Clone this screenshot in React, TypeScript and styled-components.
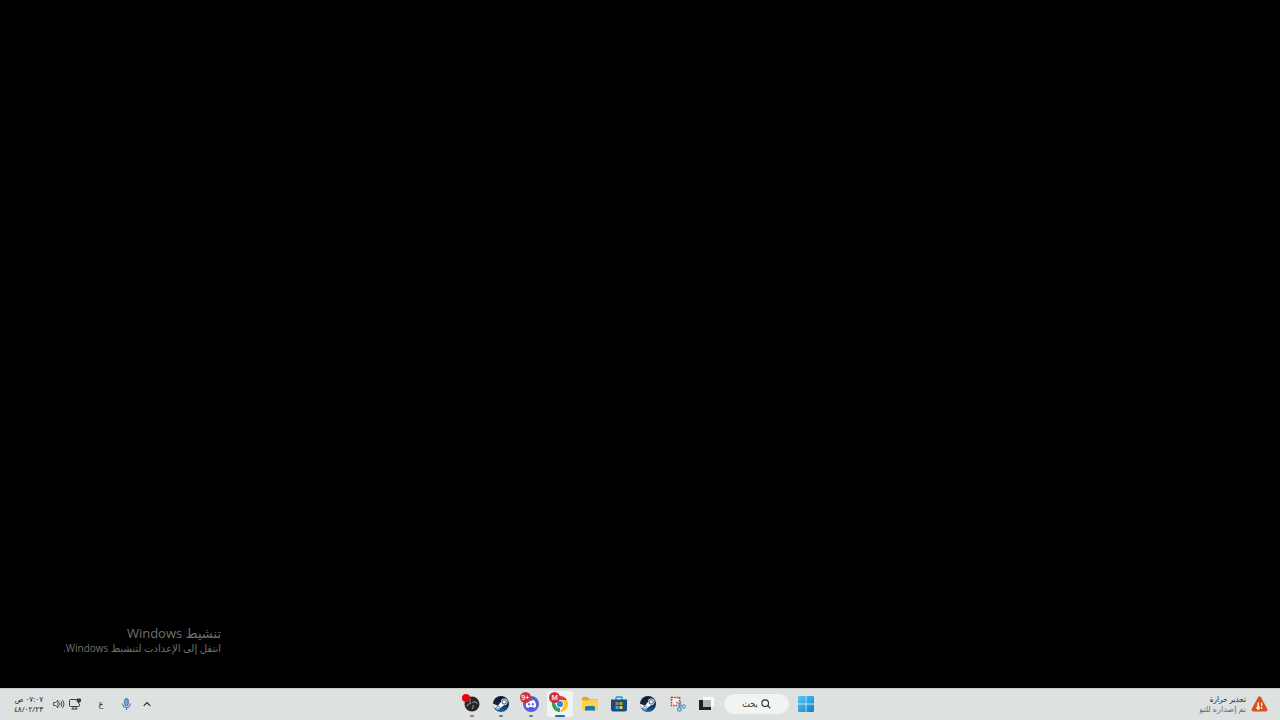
import React from "react";
import styled, { createGlobalStyle } from "styled-components";

const GlobalStyle = createGlobalStyle`
  * { box-sizing: border-box; }
  body { margin: 0; background: #000; }
  button { margin: 0; padding: 0; border: 0; background: none; font: inherit; color: inherit; }
  svg { display: block; }
`;

const Desktop = styled.div`
  direction: rtl;
  min-height: 100vh;
  display: flex;
  flex-direction: column;
  background: #000;
  font-family: "Open Sans", "DejaVu Sans Condensed", "DejaVu Sans", sans-serif;
`;

const Wallpaper = styled.main`
  flex: 1;
  display: flex;
  justify-content: flex-end;
  align-items: flex-end;
  padding: 0 0 33px 64px;
`;

const Watermark = styled.section`
  width: 157px;
  color: #707070;
  font-family: "Open Sans", "DejaVu Sans", sans-serif;
  white-space: nowrap;
`;

const WatermarkTitle = styled.h1`
  margin: 0;
  font-size: 13px;
  font-weight: 400;
  line-height: 16px;
`;

const WatermarkText = styled.p`
  margin: 0;
  font-size: 10px;
  line-height: 14px;
`;

const Taskbar = styled.footer`
  height: 32px;
  display: grid;
  grid-template-columns: 1fr auto 1fr;
  align-items: center;
  background: #dde1e0;
  box-shadow: inset 0 1px #c6c9c8;
  color: #2a2a2a;
  font-size: 8px;
  line-height: 10px;
`;

const Weather = styled.button`
  justify-self: start;
  display: flex;
  align-items: center;
  gap: 5px;
  padding-right: 12px;
  text-align: right;
  white-space: nowrap;
`;

const Line = styled.span<{ $muted?: boolean }>`
  display: block;
  color: ${(p) => (p.$muted ? "#686b6b" : "#222")};
  font-family: ${(p) => (p.$muted ? '"Open Sans", "DejaVu Sans", sans-serif' : "inherit")};
`;

const Center = styled.div`
  display: flex;
  align-items: center;
  gap: 4px;
  padding-right: 2px;
`;

const Apps = styled.nav`
  width: 261px;
  display: flex;
  justify-content: space-between;
`;

const AppButton = styled.button<{ $active?: boolean }>`
  position: relative;
  width: 26px;
  height: 26px;
  display: flex;
  align-items: center;
  justify-content: center;
  border-radius: 3px;
  background: ${(p) => (p.$active ? "#f2f4f3" : "transparent")};
`;

const Indicator = styled.span<{ $active?: boolean }>`
  position: absolute;
  bottom: 0;
  left: 50%;
  transform: translateX(-50%);
  width: ${(p) => (p.$active ? 10 : 4)}px;
  height: 2px;
  border-radius: 1px;
  background: ${(p) => (p.$active ? "#1773b5" : "#777b7b")};
`;

const Badge = styled.span<{ $plain?: boolean }>`
  position: absolute;
  top: ${(p) => (p.$plain ? 3 : 1)}px;
  left: ${(p) => (p.$plain ? 3 : 2)}px;
  width: ${(p) => (p.$plain ? 8 : 11)}px;
  height: ${(p) => (p.$plain ? 8 : 11)}px;
  border-radius: 50%;
  background: ${(p) => (p.$plain ? "#f00006" : "#ca3340")};
  color: #fff;
  direction: ltr;
  font-size: 7px;
  font-weight: 600;
  line-height: 11px;
  text-align: center;
`;

const Search = styled.button`
  width: 65px;
  height: 20px;
  display: flex;
  align-items: center;
  justify-content: center;
  gap: 3px;
  border-radius: 10px;
  background: #f2f4f3;
  font-size: 9px;
`;

const Tray = styled.div`
  justify-self: end;
  display: flex;
  align-items: center;
  padding-left: 12px;
`;

const TrayButton = styled.button<{ $width: number }>`
  width: ${(p) => p.$width}px;
  height: 26px;
  display: flex;
  align-items: center;
  justify-content: center;
  font-size: 9px;
`;

const SystemButton = styled(TrayButton)`
  gap: 4px;
  margin: 0 6px 0 10px;
`;

const Clock = styled.button`
  width: 31px;
  text-align: right;
  white-space: nowrap;
`;

const WarningIcon = () => (
  <svg width="17" height="16" viewBox="0 0 17 16" aria-hidden="true">
    <path d="M7 1.2Q8.5-.8 10 1.2L16.3 13Q17 15.4 14.7 15.5H2.3Q0 15.4.7 13Z" fill="#d65320" />
    <path d="M6.4 6.5v3.8a1.8 1.8 0 1 0 1.6 0V6.500Z" fill="#ffe7d9" />
    <path d="M10.6 6.500v3.700" stroke="#ffe7d9" strokeWidth="1.300" />
    <circle cx="10.600" cy="12" r=".9" fill="#ffe7d9" />
  </svg>
);

const StartIcon = () => (
  <svg width="16" height="16" viewBox="0 0 16 16" aria-hidden="true">
    <defs>
      <linearGradient id="start" x1="0" y1="0" x2="1" y2="1">
        <stop stopColor="#55c9f4" />
        <stop offset="1" stopColor="#0880ce" />
      </linearGradient>
    </defs>
    <path d="M1 0h6.6v7.6H0V1Q0 0 1 0Zm7.4 0H15q1 0 1 1v6.6H8.4ZM0 8.4h7.6V16H1q-1 0-1-1Zm8.4 0H16V15q0 1-1 1H8.4Z" fill="url(#start)" />
  </svg>
);

const SearchIcon = () => (
  <svg width="10" height="10" viewBox="0 0 10 10" fill="none" stroke="#292929" strokeWidth="1.1" aria-hidden="true">
    <circle cx="4.2" cy="4.2" r="3.3" />
    <path d="m6.7 6.7 2.7 2.7" />
  </svg>
);

const TaskViewIcon = () => (
  <svg width="16" height="16" viewBox="0 0 16 16" aria-hidden="true">
    <path d="M4 1h11v10h-3v3H4Z" fill="#f8f9f9" />
    <path d="M0 4h4v7h8v3H0Z" fill="#202020" />
    <path d="M4 4h8v7H4Z" fill="#b4b7b7" />
  </svg>
);

const SnipIcon = () => (
  <svg width="16" height="16" viewBox="0 0 16 16" fill="none" aria-hidden="true">
    <path d="M1 1h9v9H1Z" fill="#f5eeec" />
    <path d="M1.5 1.5h8v8h-8Z" stroke="#b33b22" strokeWidth="1.6" strokeDasharray="1.6 1" />
    <path d="m6 6 7 4.6M10.7 5 9.5 11.6" stroke="#769bad" strokeWidth="1.3" />
    <circle cx="13.7" cy="10.5" r="1.7" stroke="#4fa7d8" strokeWidth="1.2" />
    <circle cx="9.4" cy="13.4" r="1.8" stroke="#358fc7" strokeWidth="1.2" />
  </svg>
);

const SteamIcon = ({ id }: { id: string }) => (
  <svg width="16" height="16" viewBox="0 0 16 16" aria-hidden="true">
    <defs>
      <linearGradient id={id} x1="0" y1="0" x2="0" y2="1">
        <stop stopColor="#10172f" />
        <stop offset=".55" stopColor="#102850" />
        <stop offset="1" stopColor="#176d9f" />
      </linearGradient>
      <clipPath id={`${id}-clip`}>
        <circle cx="8" cy="8" r="8" />
      </clipPath>
    </defs>
    <circle cx="8" cy="8" r="8" fill={`url(#${id})`} />
    <g clipPath={`url(#${id}-clip)`}>
      <path d="M-1 7.3 5 9.8 8 5.7a3.3 3.3 0 1 1 3.1 3.5l-3.8 2.7a2.5 2.5 0 0 1-4.8.2L-1 10.6Z" fill="#f4f7fa" />
    </g>
    <circle cx="11.2" cy="5.9" r="2.2" fill="none" stroke="#15294b" strokeWidth=".8" />
    <circle cx="5" cy="11.6" r="1.5" fill="none" stroke="#24547d" strokeWidth=".7" />
  </svg>
);

const StoreIcon = () => (
  <svg width="16" height="16" viewBox="0 0 16 16" aria-hidden="true">
    <path d="M5 4V1.8Q5 1 5.8 1h4.4q.8 0 .8.8V4" fill="none" stroke="#2396d5" strokeWidth="1.3" />
    <path d="M0 3.5h16V13q0 2.5-2.5 2.5h-11Q0 15.500 0 13Z" fill="#164f7d" />
    <path d="M4.500 6h3v3h-3Z" fill="#ed5d3c" />
    <path d="M8.500 6h3v3h-3Z" fill="#84bd40" />
    <path d="M4.500 10h3v3h-3Z" fill="#37aee3" />
    <path d="M8.500 10h3v3h-3Z" fill="#f5c33d" />
  </svg>
);

const FolderIcon = () => (
  <svg width="16" height="16" viewBox="0 0 16 16" aria-hidden="true">
    <path d="M0 2q0-1 1-1h4.500l2 2H15q1 0 1 1v4H0Z" fill="#e7a51d" />
    <path d="M0 4.500h6L7.500 3.500H15q1 0 1 1v9q0 1-1 1H1q-1 0-1-1Z" fill="#fbd34d" />
    <path d="M3 14.500v-3q0-1.500 1.500-1.500h7q1.500 0 1.500 1.500v3Z" fill="#1777b8" />
  </svg>
);

const ChromeIcon = () => (
  <svg width="16" height="16" viewBox="0 0 16 16" aria-hidden="true">
    <path d="M8 8 1.070 4A8 8 0 0 1 14.930 4Z" fill="#dc4437" />
    <path d="M8 8V16A8 8 0 0 1 1.070 4L4.500 10Z" fill="#30a650" />
    <path d="M8 4h6.930A8 8 0 0 1 8 16l3.500-6Z" fill="#fac51c" />
    <circle cx="8" cy="8" r="4" fill="#fff" />
    <circle cx="8" cy="8" r="3.100" fill="#3c7ee8" />
  </svg>
);

const DiscordIcon = () => (
  <svg width="16" height="16" viewBox="0 0 16 16" aria-hidden="true">
    <circle cx="8" cy="8" r="8" fill="#5560dc" />
    <path d="M4.400 4.700Q5.500 4 6.600 4l.5.8h1.800l.5-.8q1.100 0 2.200.7 1.700 2.700 1.500 6-1.200 1-2.500 1.200l-.7-1.100q-1.900.6-3.800 0l-.7 1.100Q4.100 11.700 2.900 10.700q-.2-3.300 1.500-6Z" fill="#fff" />
    <ellipse cx="6.100" cy="8.300" rx="1" ry="1.200" fill="#5560dc" />
    <ellipse cx="9.900" cy="8.300" rx="1" ry="1.200" fill="#5560dc" />
  </svg>
);

const ObsIcon = () => (
  <svg width="16" height="16" viewBox="0 0 16 16" fill="none" aria-hidden="true">
    <circle cx="8" cy="8" r="7.500" fill="#262427" />
    <path d="M6.300 2.500q-2 3 1.200 5 2.700-3.300 6 0M7.500 7.500q3.300 2.500.5 5.500M7.500 7.500Q3.500 7 2.800 10.500" stroke="#aaa8ab" />
    <circle cx="8" cy="8" r="1.300" fill="#262427" />
  </svg>
);

const ChevronIcon = () => (
  <svg width="8" height="6" viewBox="0 0 8 6" fill="none" stroke="#292929" strokeWidth="1.200" aria-hidden="true">
    <path d="m.7 4.800 3.300-3.300 3.300 3.300" />
  </svg>
);

const MicIcon = () => (
  <svg width="9" height="12" viewBox="0 0 9 12" fill="none" stroke="#3566ab" aria-hidden="true">
    <rect x="2.800" y=".6" width="3.400" height="7" rx="1.700" fill="#7fa8dd" />
    <path d="M.7 5.500v.7a3.800 3.300 0 0 0 7.600 0v-.7M4.500 9.500V12" />
  </svg>
);

const MonitorIcon = () => (
  <svg width="12" height="12" viewBox="0 0 12 12" fill="none" stroke="#3b3d3d" aria-hidden="true">
    <path d="M7.500 1.500h-6q-1 0-1 1v5q0 1 1 1h8q1 0 1-1V6M4 8.500v2.500M7 8.500v2.500M2.500 11h6" />
    <path d="M8 1h3.500v2.500q-1.700 1.500-3.500 0ZM9.800 4v2" fill="#3b3d3d" />
  </svg>
);

const VolumeIcon = () => (
  <svg width="12" height="10" viewBox="0 0 12 10" fill="none" stroke="#3b3d3d" strokeWidth=".9" aria-hidden="true">
    <path d="M.6 3.500h1.900L5 1.200v7.600L2.500 6.500H.6ZM6.500 3.500q1 1.500 0 3M8 2.200q2 2.800 0 5.600M9.600 1q3 4 0 8" />
  </svg>
);

type TaskApp = {
  name: string;
  icon: React.ReactNode;
  open?: boolean;
  active?: boolean;
  badge?: string;
};

const apps: TaskApp[] = [
  { name: "عرض المهام", icon: <TaskViewIcon /> },
  { name: "أداة القطع", icon: <SnipIcon /> },
  { name: "Steam", icon: <SteamIcon id="steam-pinned" /> },
  { name: "Microsoft Store", icon: <StoreIcon /> },
  { name: "مستكشف الملفات", icon: <FolderIcon /> },
  { name: "Google Chrome", icon: <ChromeIcon />, open: true, active: true, badge: "M" },
  { name: "Discord", icon: <DiscordIcon />, open: true, badge: "9+" },
  { name: "Steam", icon: <SteamIcon id="steam-open" />, open: true },
  { name: "OBS Studio", icon: <ObsIcon />, open: true, badge: "" },
];

export default function App() {
  return (
    <Desktop lang="ar">
      <GlobalStyle />
      <Wallpaper>
        <Watermark>
          <WatermarkTitle>تنشيط Windows</WatermarkTitle>
          <WatermarkText>انتقل إلى الإعدادت لتنشيط Windows.</WatermarkText>
        </Watermark>
      </Wallpaper>
      <Taskbar>
        <Weather>
          <WarningIcon />
          <span>
            <Line>تحذير حرارة</Line>
            <Line $muted>تم إصداره للتو</Line>
          </span>
        </Weather>
        <Center>
          <AppButton aria-label="ابدأ">
            <StartIcon />
          </AppButton>
          <Search>
            <SearchIcon />
            <span>بحث</span>
          </Search>
          <Apps>
            {apps.map((app, i) => (
              <AppButton key={i} aria-label={app.name} $active={app.active}>
                {app.icon}
                {app.badge !== undefined && <Badge $plain={app.badge === ""}>{app.badge}</Badge>}
                {app.open && <Indicator $active={app.active} />}
              </AppButton>
            ))}
          </Apps>
        </Center>
        <Tray>
          <TrayButton $width={20} aria-label="إظهار الأيقونات المخفية">
            <ChevronIcon />
          </TrayButton>
          <TrayButton $width={22} aria-label="الميكروفون">
            <MicIcon />
          </TrayButton>
          <TrayButton $width={28}>ع</TrayButton>
          <SystemButton $width={28} aria-label="الشبكة والصوت">
            <MonitorIcon />
            <VolumeIcon />
          </SystemButton>
          <Clock>
            <Line>٠٧:٠٧ ص</Line>
            <Line>٤٨/٠٢/٢٣</Line>
          </Clock>
        </Tray>
      </Taskbar>
    </Desktop>
  );
}
